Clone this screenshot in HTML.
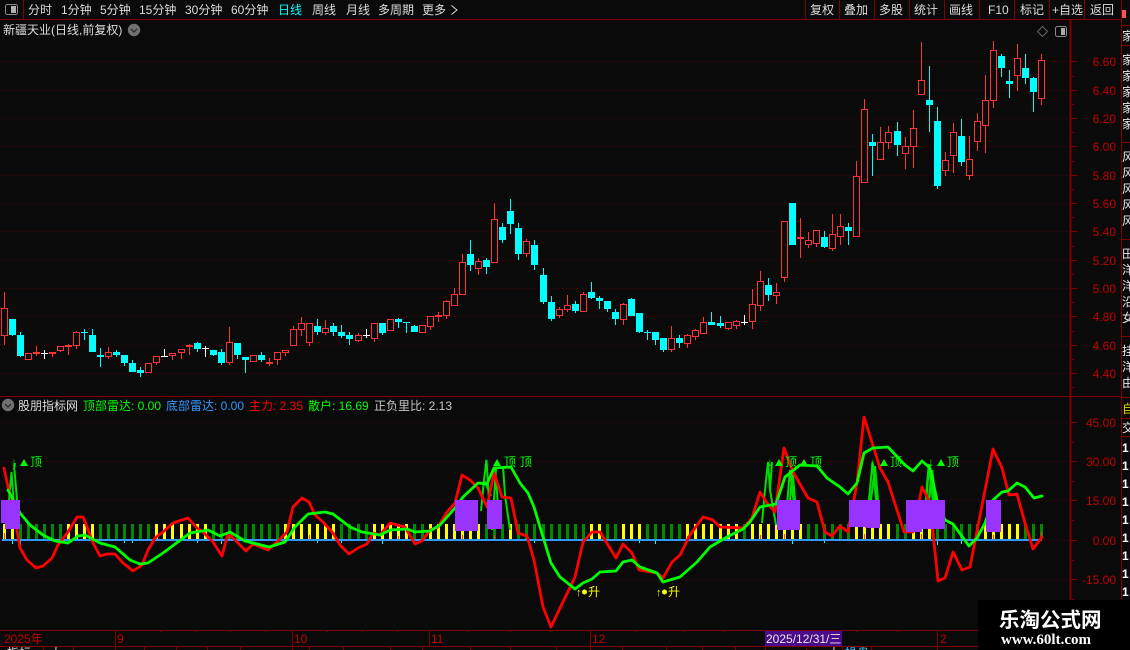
<!DOCTYPE html>
<html><head><meta charset="utf-8"><style>
html,body{margin:0;padding:0;background:#0a0a0a;width:1130px;height:650px;overflow:hidden}
svg{display:block;font-family:"Liberation Sans","WenQuanYi Zen Hei Sharp","WenQuanYi Zen Hei","Noto Sans CJK SC",sans-serif;font-size:12px}
.m{fill:#dcdcdc}.ax{fill:#c00000;text-anchor:end}
</style></head><body>
<svg width="1130" height="650" viewBox="0 0 1130 650" xmlns="http://www.w3.org/2000/svg">
<rect width="1130" height="650" fill="#0a0a0a"/>
<!-- grid -->
<g stroke="#5e0000" stroke-width="1" stroke-dasharray="1 3" shape-rendering="crispEdges">
<path d="M2 61.5H1070M2 90.5H1070M2 118.5H1070M2 146.5H1070M2 175.5H1070M2 203.5H1070M2 231.5H1070M2 260.5H1070M2 288.5H1070M2 316.5H1070M2 345.5H1070M2 373.5H1070M2 422.5H1070M2 461.5H1070M2 500.5H1070M1044 540.5H1070M2 579.5H1070"/>
</g>
<!-- frame lines -->
<g stroke="#800000" fill="none" shape-rendering="crispEdges">
<path d="M0 19.5H1122M23.5 0V19M805.5 0V19M839.5 0V19M874.5 0V19M909.5 0V19M944.5 0V19M979.5 0V19M1014.5 0V19M1049.5 0V19M1084.5 0V19"/>
<path d="M0 396.5H1122M0 630.5H978M0 646.5H978" stroke-width="1"/>
<path d="M1070.5 20V630" stroke-width="2"/>
<path d="M1121.5 0V600" stroke-width="1"/>
<path d="M1122 25.5H1130M1122 45.5H1130M1122 142.5H1130M1122 239.5H1130M1122 336.5H1130M1122 397.5H1130M1122 418.5H1130M1122 436.5H1130"/>
<path d="M1071 61.5h6M1071 90.5h6M1071 118.5h6M1071 146.5h6M1071 175.5h6M1071 203.5h6M1071 231.5h6M1071 260.5h6M1071 288.5h6M1071 316.5h6M1071 345.5h6M1071 373.5h6M1071 76.5h3M1071 104.5h3M1071 132.5h3M1071 161.5h3M1071 189.5h3M1071 217.5h3M1071 246.5h3M1071 274.5h3M1071 302.5h3M1071 331.5h3M1071 359.5h3M1071 387.5h3"/>
<path d="M1071 422.5h6M1071 461.5h6M1071 500.5h6M1071 540.5h6M1071 579.5h6M1071 442.5h3M1071 481.5h3M1071 520.5h3M1071 560.5h3M1071 599.5h3M1071 618.5h3"/>
<path d="M115.5 630V646M292.5 630V646M429.5 630V646M590.5 630V646M937.5 630V646M43.5 646V650M73.5 646V650M115.5 646V650M144.5 646V650M176.5 646V650M207.5 646V650M240.5 646V650M292.5 646V650M309.5 646V650M343.5 646V650M390.5 646V650M422.5 646V650M470.5 646V650M510.5 646V650M556.5 646V650M590.5 646V650M622.5 646V650M666.5 646V650M702.5 646V650M735.5 646V650M765.5 646V650M806.5 646V650M842.5 646V650M871.5 646V650M937.5 646V650M160.5 630V632M195.5 630V632M230.5 630V632M265.5 630V632M327.5 630V632M362.5 630V632M397.5 630V632M468.5 630V632M510.5 630V632M550.5 630V632M636.5 630V632M683.5 630V632M723.5 630V632M856.5 630V632M897.5 630V632"/>
</g>
<!-- top menu -->
<rect x="5.5" y="4.5" width="12" height="10" rx="2" fill="none" stroke="#8a8a8a"/><rect x="11" y="6" width="5" height="7" fill="#b0b0b0"/>
<g class="m">
<text x="28" y="14">分时</text><text x="61" y="14">1分钟</text><text x="100" y="14">5分钟</text><text x="139" y="14">15分钟</text><text x="185" y="14">30分钟</text><text x="231" y="14">60分钟</text>
<text x="278" y="14" fill="#00ffff" style="fill:#00ffff">日线</text>
<text x="312" y="14">周线</text><text x="346" y="14">月线</text><text x="378" y="14">多周期</text><text x="422" y="14">更多</text>
<path d="M451.5 5.5L457 10L451.5 14.500" fill="none" stroke="#dcdcdc"/>
<text x="810" y="14">复权</text><text x="844" y="14">叠加</text><text x="879" y="14">多股</text><text x="914" y="14">统计</text><text x="949" y="14">画线</text><text x="988" y="14">F10</text><text x="1020" y="14">标记</text><text x="1052" y="14">+自选</text><text x="1090" y="14">返回</text>
<text x="3" y="34">新疆天业(日线,前复权)</text>
</g>
<rect x="1122" y="10" width="4" height="8" fill="#f55"/>
<circle cx="134" cy="30" r="6.200" fill="#707070"/><path d="M131 29l3 3 3-3" fill="none" stroke="#222" stroke-width="1.200"/>
<path d="M1042.500 26.500l5 5-5 5-5-5z" fill="none" stroke="#666"/>
<rect x="1055.500" y="26.500" width="11" height="10" rx="2" fill="none" stroke="#8a8a8a"/><rect x="1061" y="28" width="4" height="7" fill="#aaa"/>
<!-- price axis -->
<g class="ax">
<text x="1116" y="66">6.60</text><text x="1116" y="95">6.40</text><text x="1116" y="123">6.20</text><text x="1116" y="151">6.00</text><text x="1116" y="180">5.80</text><text x="1116" y="208">5.60</text><text x="1116" y="236">5.40</text><text x="1116" y="265">5.20</text><text x="1116" y="293">5.00</text><text x="1116" y="321">4.80</text><text x="1116" y="350">4.60</text><text x="1116" y="378">4.40</text>
<text x="1116" y="427">45.00</text><text x="1116" y="466">30.00</text><text x="1116" y="505">15.00</text><text x="1116" y="545">0.00</text><text x="1116" y="584">-15.00</text>
</g>
<!-- candles -->
<g fill="none" shape-rendering="crispEdges">
<path stroke="#00ffff" d="M12.5 319V336M20.5 332V357M84.5 329V340M92.5 329V352M100.5 348V367M116.5 350V357M124.5 355V366M132.5 360V372M140.500 367V377M197.500 342V352M213.500 350V356M221.500 349V365M237.500 343V359M245.500 357V373M261.500 352V362M317.500 319V335M333.500 323V336M341.500 325V338M349.500 332V345M382.500 323V335M398.500 318V328M406.500 322V333M414.500 325V332M470.500 240V271M486.500 258V274M502.500 223V243M510.500 199V234M518.500 223V260M534.500 240V270M543.500 268V304M551.500 296V321M575.500 301V313M591.500 282V299M599.500 296V309M607.500 301V312M615.500 309V325M631.500 298V316M639.500 313V333M647.500 330V340M655.500 332V345M663.500 338V352M679.500 335V348M711.500 312V325M720.500 316V328M768.500 278V301M792.500 203V245M824.500 231V248M848.500 223V245M872.500 134V176M897.500 122V156M929.500 66V132M937.500 107V189M961.500 119V166M1001.500 54V77M1009.500 70V98M1025.500 54V84M1033.500 77V112"/>
<path stroke="#00ffff" stroke-width="7" d="M12.5 319V335M20.5 335V356M84.5 332V333M92.5 335V352M100.5 355V357M116.5 352V355M124.5 355V363M132.5 363V372M140.500 370V373M197.500 343V349M213.500 350V355M221.500 352V363M237.500 343V355M245.500 357V360M261.500 355V360M317.500 326V332M333.500 326V332M341.500 332V336M349.500 335V339M382.500 323V333M398.500 319V322M406.500 322V323M414.500 326V332M470.500 254V265M486.500 260V267M502.500 227V240M510.500 211V224M518.500 228V254M534.500 245V265M543.500 275V302M551.500 302V319M575.500 304V311M591.500 292V298M599.500 298V301M607.500 301V309M615.500 312V319M631.500 299V316M639.500 313V332M647.500 332V333M655.500 332V340M663.500 338V350M679.500 338V343M711.500 322V325M720.500 323V326M768.500 285V295M792.500 203V245M824.500 237V247M848.500 227V231M872.500 142V146M897.500 131V145M929.500 100V105M937.500 121V186M961.500 136V162M1001.500 56V68M1009.500 81V84M1025.500 68V78M1033.500 78V92"/>
<path stroke="#ffffff" d="M44.500 350V359M41 353.500h7M164.500 349V357M161 356.500h7M205.500 346V357M202 348.500h7M366.500 329V338M363 335.500h7M744.500 315V325M741 322.500h7"/>
<path stroke="#ff3333" d="M4.5 292V345M36.500 346V356M52.500 352V357M60.500 350V352M68.500 344V355M76.500 331V349M108.500 347V359M156.500 362V365M172.500 355V360M181.500 352V359M189.500 344V355M229.500 327V365M253.500 361V362M269.500 358V366M277.500 359V365M285.500 352V356M293.500 326V345M301.500 317V336M309.500 342V346M325.500 320V335M358.500 333V342M374.500 338V342M430.500 326V330M438.500 312V322M446.500 300V319M454.500 288V294M462.500 254V262M478.500 258V275M494.500 203V219M526.500 239V257M559.500 307V318M567.500 295V312M583.500 292V294M623.500 303V325M671.500 326V352M687.500 334V348M695.500 329V340M703.500 317V322M728.500 328V330M736.500 320V329M752.500 289V329M760.500 271V311M776.500 283V304M784.500 277V282M800.500 218V258M808.500 232V248M816.500 243V247M832.500 214V251M840.500 214V245M856.500 161V176M864.500 99V109M880.500 127V142M888.500 126V149M905.500 137V169M913.500 110V168M921.500 42V80M945.500 152V176M953.500 123V173M969.500 136V180M977.500 113V151M985.500 75V153M993.500 41V108M1017.500 44V91M1041.500 54V105"/>
<path stroke="#ff3333" fill="#0a0a0a" d="M1.5 308.500h6v27h-6zM25.500 353.500h6v6h-6zM33.500 352.500h6v1h-6zM49.500 352.500h6v1h-6zM57.500 346.500h6v4h-6zM65.500 345.500h6v1h-6zM73.500 332.500h6v13h-6zM105.500 352.500h6v4h-6zM145.500 363.500h6v9h-6zM153.500 356.500h6v6h-6zM169.500 353.500h6v2h-6zM178.500 349.500h6v3h-6zM186.500 345.500h6v1h-6zM226.500 342.500h6v20h-6zM250.500 355.500h6v6h-6zM266.500 362.500h6v1h-6zM274.500 352.500h6v7h-6zM282.500 350.500h6v2h-6zM290.500 329.500h6v16h-6zM298.500 323.500h6v6h-6zM306.500 323.500h6v19h-6zM322.500 328.500h6v4h-6zM355.500 335.500h6v5h-6zM371.500 323.500h6v15h-6zM387.500 319.500h6v11h-6zM419.500 325.500h6v7h-6zM427.500 316.500h6v10h-6zM435.500 315.500h6v1h-6zM443.500 301.500h6v14h-6zM451.500 294.500h6v11h-6zM459.500 262.500h6v32h-6zM475.500 261.500h6v7h-6zM491.500 219.500h6v43h-6zM523.500 241.500h6v12h-6zM556.500 309.500h6v6h-6zM564.500 305.500h6v4h-6zM580.500 294.500h6v17h-6zM620.500 304.500h6v15h-6zM668.500 338.500h6v11h-6zM684.500 335.500h6v8h-6zM692.500 330.500h6v6h-6zM700.500 322.500h6v11h-6zM725.500 322.500h6v6h-6zM733.500 321.500h6v4h-6zM749.500 304.500h6v17h-6zM757.500 281.500h6v24h-6zM773.500 292.500h6v3h-6zM781.500 221.500h6v56h-6zM797.500 237.500h6v1h-6zM805.500 240.500h6v4h-6zM813.500 230.500h6v13h-6zM829.500 234.500h6v14h-6zM837.500 226.500h6v10h-6zM853.500 176.500h6v60h-6zM861.500 109.500h6v73h-6zM877.500 142.500h6v17h-6zM885.500 132.500h6v10h-6zM902.500 146.500h6v7h-6zM910.500 128.500h6v18h-6zM918.500 80.500h6v14h-6zM942.500 160.500h6v10h-6zM950.500 132.500h6v23h-6zM966.500 159.500h6v16h-6zM974.500 121.500h6v20h-6zM982.500 100.500h6v25h-6zM990.500 50.500h6v50h-6zM1014.500 58.500h6v17h-6zM1038.500 60.500h6v38h-6z"/>
</g>
<!-- indicator header -->
<circle cx="8" cy="405" r="6.200" fill="#707070"/><path d="M5 404l3 3 3-3" fill="none" stroke="#222" stroke-width="1.200"/>
<text x="18" y="410" class="m">股朋指标网</text>
<text x="83" y="410" fill="#00ff00">顶部雷达: 0.00</text>
<text x="166" y="410" fill="#3399ff">底部雷达: 0.00</text>
<text x="249" y="410" fill="#ff0000">主力: 2.35</text>
<text x="308" y="410" fill="#00ff00">散户: 16.69</text>
<text x="374" y="410" fill="#c8c8c8">正负里比: 2.13</text>
<!-- bars -->
<g fill="none" shape-rendering="crispEdges" stroke-width="3">
<path stroke="#008a00" d="M20.5 524v15M28.5 524v15M36.5 524v15M44.500 524v15M52.500 524v15M60.500 524v15M100.500 524v15M108.500 524v15M116.500 524v15M124.500 524v15M132.500 524v15M140.500 524v15M148.500 524v15M213.500 524v15M221.500 524v15M229.500 524v15M237.500 524v15M245.500 524v15M253.500 524v15M261.500 524v15M269.500 524v15M277.500 524v15M341.500 524v15M349.500 524v15M358.500 524v15M366.500 524v15M414.500 524v15M422.500 524v15M486.500 524v15M494.500 524v15M502.500 524v15M518.500 524v15M526.500 524v15M534.500 524v15M543.500 524v15M551.500 524v15M559.500 524v15M567.500 524v15M575.500 524v15M583.500 524v15M607.500 524v15M615.500 524v15M647.500 524v15M655.500 524v15M663.500 524v15M671.500 524v15M679.500 524v15M744.500 524v15M808.500 524v15M816.500 524v15M824.500 524v15M832.500 524v15M840.500 524v15M848.500 524v15M897.500 524v15M905.500 524v15M937.500 524v15M945.500 524v15M953.500 524v15M961.500 524v15M969.500 524v15M977.500 524v15M1025.500 524v15M1033.500 524v15M1041.500 524v15"/>
<path stroke="#ffff00" d="M4.500 524v15M12.500 524v15M68.500 524v15M76.500 524v15M84.500 524v15M92.500 524v15M156.500 524v15M164.500 524v15M172.500 524v15M181.500 524v15M189.500 524v15M197.500 524v15M205.500 524v15M285.500 524v15M293.500 524v15M301.500 524v15M309.500 524v15M317.500 524v15M325.500 524v15M333.500 524v15M374.500 524v15M382.500 524v15M390.500 524v15M398.500 524v15M406.500 524v15M430.500 524v15M438.500 524v15M446.500 524v15M454.500 524v15M462.500 524v15M470.500 524v15M478.500 524v15M510.500 524v15M591.500 524v15M599.500 524v15M623.500 524v15M631.500 524v15M639.500 524v15M687.500 524v15M695.500 524v15M703.500 524v15M711.500 524v15M720.500 524v15M728.500 524v15M736.500 524v15M752.500 524v15M760.500 524v15M768.500 524v15M776.500 524v15M784.500 524v15M792.500 524v15M800.500 524v15M856.500 524v15M864.500 524v15M872.500 524v15M880.500 524v15M888.500 524v15M913.500 524v15M921.500 524v15M929.500 524v15M985.500 524v15M993.500 524v15M1001.500 524v15M1009.500 524v15M1017.500 524v15"/>
<path stroke="#ff3333" stroke-width="1" d="M4.500 533v6M76.500 535v4M156.500 536v3M229.500 537v2M309.500 535v4M398.500 536v3M462.500 535v4M494.500 535v4M687.500 536v3M760.500 535v4M784.500 534v5M864.500 534v5M921.500 534v5M993.500 535v4M1041.500 532v7"/>
<path stroke="#3399ff" stroke-width="2" d="M2 540H1042"/>
<path stroke="#00ffff" stroke-width="1" d="M12.500 541v3M20.500 541v4M92.500 541v3M124.500 541v2M132.500 541v2M197.500 541v2M221.500 541v3M237.500 541v3M317.500 541v2M341.500 541v2M382.500 541v3M414.500 541v2M534.500 541v2M639.500 541v2M655.500 541v3M792.500 541v3M824.500 541v2M937.500 541v4M961.500 541v3"/>
</g>
<!-- thin spikes -->
<g fill="none" stroke="#00dd00" stroke-width="2" stroke-linejoin="bevel">
<path d="M9 500L11.500 472L13.500 500M14 470L15 463M14.500 470L17 500"/>
<path d="M481 511L484 480L486.500 460L489 500M484 480L491 496M495 467L498 505M503 466L505 495L510 530M492 530L496 468"/>
<path d="M762 523L765 490L768 462L770 490L772 462M770 490L776 525M790 500L792.500 470L795 500M787 505L790 470L794 505"/>
<path d="M869 500L872.500 462L876 500M871 500L875 466L878 500"/>
<path d="M926 500L929 464L933 500M929 500L932 470L936 505" stroke-width="2.500"/>
</g>
<!-- main lines -->
<g fill="none" stroke-width="2.800" stroke-linejoin="round" stroke-linecap="round">
<path stroke="#ff0000" d="M4 468L8 487L12 500L16 525L20 548L27 560L36 568L43 566L52 558L58 545L68 532L77 517L83 517L87 527L93 543L100 556L107 554L115 554L123 563L133 571L142 565L148 550L155 538L163 532L173 523L188 518L197 528L203 532L213 542L222 556L228 533L237 542L246 551L253 544L268 550L277 542L287 532L293 507L302 498L309 502L315 515L323 522L333 533L340 545L349 554L358 548L367 544L373 533L380 535L390 523L405 527L415 544L422 541L430 530L438 527L447 512L455 503L462 475L470 480L478 488L487 507L494 473L502 497L511 498L518 533L527 536L534 560L543 607L551 627L560 608L575 577L583 542L592 532L600 532L616 558L623 544L632 553L639 570L657 573L663 578L672 562L680 555L690 535L703 517L713 520L720 527L743 528L752 518L760 492L767 503L775 512L784 448L793 472L808 498L817 502L825 532L832 536L840 526L848 532L857 483L864 417L880 468L888 482L904 532L913 532L922 487L930 503L938 581L945 578L953 552L962 570L970 567L993 449L1002 468L1009 495L1017 494L1025 523L1033 549L1042 537"/>
<path stroke="#00ff00" d="M8 490L20 513L30 525L43 535L55 541L68 543L78 536L85 535L100 543L115 547L130 560L140 564L148 563L163 553L190 533L208 530L220 536L230 532L245 541L253 543L269 547L285 542L295 527L308 514L325 512L333 514L350 527L362 532L380 535L390 530L407 529L415 532L430 531L440 525L455 508L463 497L478 483L487 484L494 468L511 467L520 483L528 493L534 507L543 537L551 563L560 577L575 589L583 583L592 579L600 572L616 571L623 562L632 560L640 567L657 573L663 582L680 577L697 562L710 547L727 537L743 529L750 522L760 507L776 504L785 477L800 465L817 466L827 478L840 487L848 494L857 483L864 453L873 448L888 447L905 465L913 471L922 461L930 468L937 500L945 520L953 524L969 546L977 538L985 523L993 500L1002 492L1008 491L1017 483L1025 487L1034 498L1042 496"/>
</g>
<!-- purple boxes -->
<g fill="#9933ff" shape-rendering="crispEdges">
<rect x="1" y="500" width="14" height="23"/><rect x="5" y="500" width="15" height="29"/>
<rect x="455" y="500" width="23" height="31"/><rect x="487" y="500" width="15" height="29"/>
<rect x="777" y="500" width="23" height="30"/>
<rect x="849" y="500" width="16" height="27"/><rect x="865" y="500" width="15" height="28"/>
<rect x="906" y="500" width="16" height="32"/><rect x="922" y="500" width="23" height="29"/>
<rect x="986" y="500" width="15" height="32"/>
</g>
<!-- markers -->
<g fill="#00ff00">
<path d="M20 466l4-7 4 7zM493 466l4-7 4 7zM775 466l4-7 4 7zM800 466l4-7 4 7zM880 466l4-7 4 7zM937 466l4-7 4 7z"/>
<text x="11" y="466">↓</text><text x="30" y="466">顶</text>
<text x="483" y="466">↓</text><text x="504" y="466">顶</text><text x="520" y="466">顶</text>
<text x="767" y="466">↓</text><text x="785" y="466">顶</text><text x="810" y="466">顶</text>
<text x="870" y="466">↓</text><text x="890" y="466">顶</text>
<text x="928" y="466">↓</text><text x="947" y="466">顶</text>
</g>
<g fill="#ffff00">
<text x="576" y="596" font-size="11">↑</text><circle cx="584.500" cy="592" r="2.500"/><text x="588" y="596">升</text>
<text x="656" y="596" font-size="11">↑</text><circle cx="664.500" cy="592" r="2.500"/><text x="668" y="596">升</text>
</g>
<!-- date axis -->
<g fill="#c00000">
<text x="4" y="643">2025年</text><text x="117" y="643">9</text><text x="294" y="643">10</text><text x="431" y="643">11</text><text x="592" y="643">12</text><text x="940" y="643">2</text>
</g>
<rect x="765" y="631" width="77" height="15" fill="#4a0a8a"/>
<text x="766" y="643" fill="#e8e8e8">2025/12/31/三</text>
<!-- bottom clipped row -->
<svg x="0" y="647" width="978" height="3" overflow="hidden">
<text x="7" y="10" fill="#e0e0e0">指标</text><text x="50" y="10" fill="#e0e0e0">大</text>
<text x="828" y="10" fill="#e0e0e0">大</text><text x="845" y="10" fill="#33ccff">操盘</text>
</svg>
<!-- right clipped column -->
<svg x="1122" y="20" width="8" height="390" overflow="hidden">
<g fill="#e8e8e8">
<text x="0" y="20">家</text>
<text x="0" y="44">家</text><text x="0" y="60">家</text><text x="0" y="76">家</text><text x="0" y="92">家</text><text x="0" y="108">家</text>
<text x="0" y="141">风</text><text x="0" y="157">风</text><text x="0" y="173">风</text><text x="0" y="189">风</text><text x="0" y="205">风</text>
<text x="0" y="238">田</text><text x="0" y="254">洋</text><text x="0" y="270">洋</text><text x="0" y="286">沿</text><text x="0" y="302">女</text>
<text x="0" y="335">挂</text><text x="0" y="351">洋</text><text x="0" y="367">由</text>
</g></svg>
<svg x="1122" y="398" width="8" height="202" overflow="hidden">
<text x="0" y="15" fill="#d8d800">自</text><text x="0" y="34" fill="#e8e8e8">交</text>
<g fill="#ffffff" font-weight="700">
<text x="0" y="54">1</text><text x="0" y="72">1</text><text x="0" y="90">1</text><text x="0" y="108">1</text><text x="0" y="126">1</text><text x="0" y="144">1</text><text x="0" y="162">1</text><text x="0" y="180">1</text><text x="0" y="198">1</text>
</g></svg>
<!-- watermark -->
<rect x="978" y="600" width="152" height="50" fill="#000"/>
<text x="999" y="627" fill="#fff" font-size="20.500" font-weight="700" style="font-family:'Noto Sans CJK SC',sans-serif">乐淘公式网</text>
<text x="1001" y="644" fill="#fff" font-size="15" font-weight="700" style="font-family:'Liberation Serif',serif">www.60lt.com</text>
</svg>
</body></html>
